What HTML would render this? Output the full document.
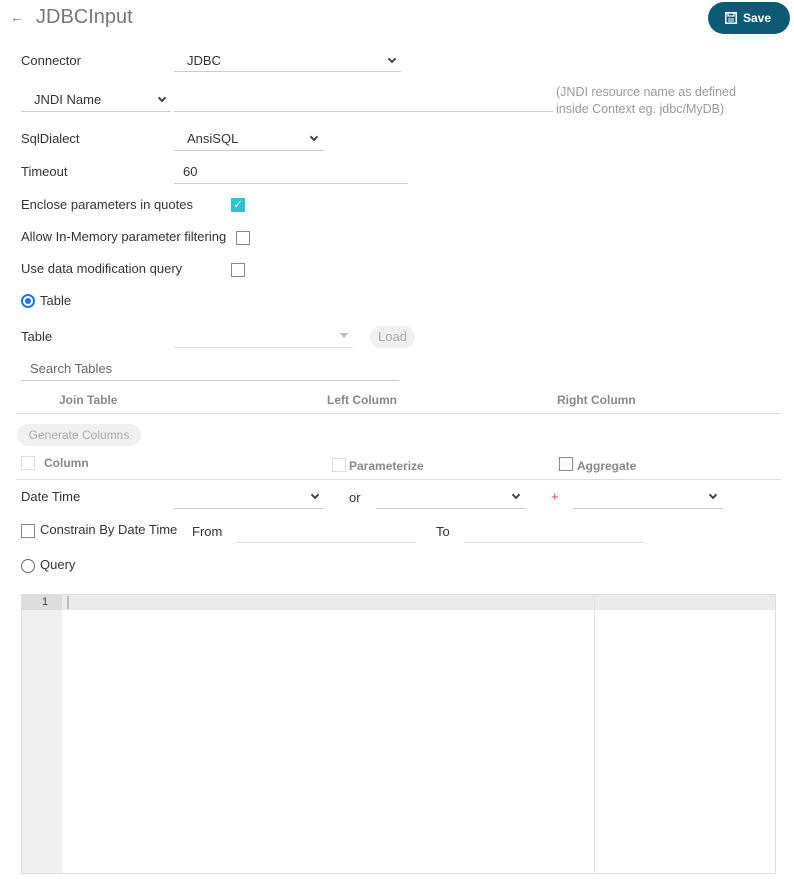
<!DOCTYPE html>
<html><head><meta charset="utf-8"><style>
*{margin:0;padding:0;box-sizing:border-box}
body{width:794px;height:879px;background:#fff;font-family:"Liberation Sans",sans-serif;font-size:13px;color:#333;position:relative;overflow:hidden}
.a{position:absolute;white-space:nowrap}
.ul{position:absolute;height:1px;background:#ccc}
.chev{position:absolute;width:6px;height:6px;border-right:2px solid #444;border-bottom:2px solid #444;transform:rotate(45deg)}
.cb{position:absolute;width:14px;height:14px;border:1px solid #888;background:#fff}
.cbd{position:absolute;width:14px;height:14px;border:1px solid #ddd;background:#fff}
.hd{font-weight:bold;color:#888;font-size:12px}
</style></head><body>
<div class="a" style="left:10px;top:9px;font-size:14px;color:#777">&#8592;</div>
<div class="a" style="left:36px;top:6px;font-size:20px;color:#777">JDBCInput</div>
<div class="a" style="left:708px;top:2px;width:82px;height:32px;border-radius:16px;background:#0d5a76;color:#fff;font-weight:bold;font-size:12px">
<svg style="position:absolute;left:17px;top:10px" width="12" height="12" viewBox="0 0 12 12"><rect x="0.8" y="0.8" width="10.4" height="10.4" fill="none" stroke="#fff" stroke-width="1.5"/><rect x="3" y="1" width="6" height="3" fill="none" stroke="#fff" stroke-width="1.2"/><line x1="3" y1="7" x2="9" y2="7" stroke="#fff"/><line x1="3" y1="9" x2="9" y2="9" stroke="#fff"/></svg>
<span style="position:absolute;left:35px;top:9px">Save</span></div>

<div class="a" style="left:21px;top:53px">Connector</div>
<div class="a" style="left:187px;top:53px">JDBC</div>
<div class="chev" style="left:389px;top:56px"></div>
<div class="ul" style="left:174px;top:71px;width:227px"></div>

<div class="a" style="left:34px;top:92px">JNDI Name</div>
<div class="chev" style="left:159px;top:95px"></div>
<div class="ul" style="left:21px;top:111px;width:150px"></div>
<div class="ul" style="left:174px;top:111px;width:379px"></div>
<div class="a" style="left:556px;top:84px;color:#999;line-height:17px;font-size:12.5px">(JNDI resource name as defined<br>inside Context eg. jdbc/MyDB)</div>

<div class="a" style="left:21px;top:131px">SqlDialect</div>
<div class="a" style="left:187px;top:131px">AnsiSQL</div>
<div class="chev" style="left:311px;top:134px"></div>
<div class="ul" style="left:174px;top:150px;width:150px"></div>

<div class="a" style="left:21px;top:164px">Timeout</div>
<div class="a" style="left:183px;top:164px">60</div>
<div class="ul" style="left:174px;top:183px;width:234px"></div>

<div class="a" style="left:21px;top:197px">Enclose parameters in quotes</div>
<div class="a" style="left:231px;top:198px;width:14px;height:14px;background:#2ec4cf;color:#fff;font-size:11px;line-height:14px;text-align:center">&#10003;</div>
<div class="a" style="left:21px;top:229px">Allow In-Memory parameter filtering</div>
<div class="cb" style="left:236px;top:231px"></div>
<div class="a" style="left:21px;top:261px">Use data modification query</div>
<div class="cb" style="left:231px;top:263px"></div>

<div class="a" style="left:21px;top:294px;width:14px;height:14px;border:2px solid #1a73e8;border-radius:50%"><div style="position:absolute;left:2px;top:2px;width:6px;height:6px;border-radius:50%;background:#1a73e8"></div></div>
<div class="a" style="left:40px;top:293px">Table</div>

<div class="a" style="left:21px;top:329px">Table</div>
<div class="a" style="left:340px;top:333px;border-left:4px solid transparent;border-right:4px solid transparent;border-top:5px solid #bbb"></div>
<div class="ul" style="left:174px;top:347px;width:179px;background:#ddd"></div>
<div class="a" style="left:370px;top:326px;width:45px;height:22px;border-radius:11px;background:#f0f0f0;color:#aaa;text-align:center;line-height:22px">Load</div>

<div class="a" style="left:30px;top:361px;color:#666">Search Tables</div>
<div class="ul" style="left:21px;top:380px;width:378px"></div>

<div class="a hd" style="left:59px;top:393px">Join Table</div>
<div class="a hd" style="left:327px;top:393px">Left Column</div>
<div class="a hd" style="left:557px;top:393px">Right Column</div>
<div class="ul" style="left:16px;top:413px;width:765px;background:#ddd"></div>

<div class="a" style="left:17px;top:424px;width:124px;height:22px;border-radius:11px;background:#f0f0f0;color:#aaa;text-align:center;line-height:22px;font-size:12px">Generate Columns</div>

<div class="cbd" style="left:21px;top:456px"></div>
<div class="a hd" style="left:44px;top:456px">Column</div>
<div class="cbd" style="left:332px;top:458px"></div>
<div class="a hd" style="left:349px;top:459px">Parameterize</div>
<div class="cb" style="left:559px;top:457px"></div>
<div class="a hd" style="left:577px;top:459px">Aggregate</div>
<div class="ul" style="left:16px;top:479px;width:765px;background:#ddd"></div>

<div class="a" style="left:21px;top:489px">Date Time</div>
<div class="chev" style="left:312px;top:492px"></div>
<div class="ul" style="left:174px;top:508px;width:150px"></div>
<div class="a" style="left:349px;top:490px">or</div>
<div class="chev" style="left:513px;top:492px"></div>
<div class="ul" style="left:376px;top:508px;width:150px"></div>
<div class="a" style="left:551px;top:489px;color:#d44">+</div>
<div class="chev" style="left:710px;top:492px"></div>
<div class="ul" style="left:573px;top:508px;width:150px"></div>

<div class="cb" style="left:21px;top:524px"></div>
<div class="a" style="left:40px;top:522px">Constrain By Date Time</div>
<div class="a" style="left:192px;top:524px">From</div>
<div class="ul" style="left:236px;top:542px;width:180px;background:#ddd"></div>
<div class="a" style="left:436px;top:524px">To</div>
<div class="ul" style="left:464px;top:542px;width:180px;background:#ddd"></div>

<div class="a" style="left:21px;top:559px;width:14px;height:14px;border:1px solid #666;border-radius:50%"></div>
<div class="a" style="left:40px;top:557px">Query</div>

<div class="a" style="left:21px;top:594px;width:755px;height:280px;border:1px solid #ddd;background:#fff">
<div class="a" style="left:0;top:0;width:40px;height:278px;background:#efefef"></div>
<div class="a" style="left:0;top:0;width:753px;height:15px;background:#ebebeb"></div>
<div class="a" style="left:0;top:0;width:40px;height:15px;background:#dcdcdc"></div>
<div class="a" style="left:20px;top:1px;font-size:11px;color:#444">1</div>
<div class="a" style="left:45px;top:1px;width:2px;height:13px;background:#bbb"></div>
<div class="a" style="left:572px;top:0;width:1px;height:278px;background:#e0e0e0"></div>
</div>
</body></html>
